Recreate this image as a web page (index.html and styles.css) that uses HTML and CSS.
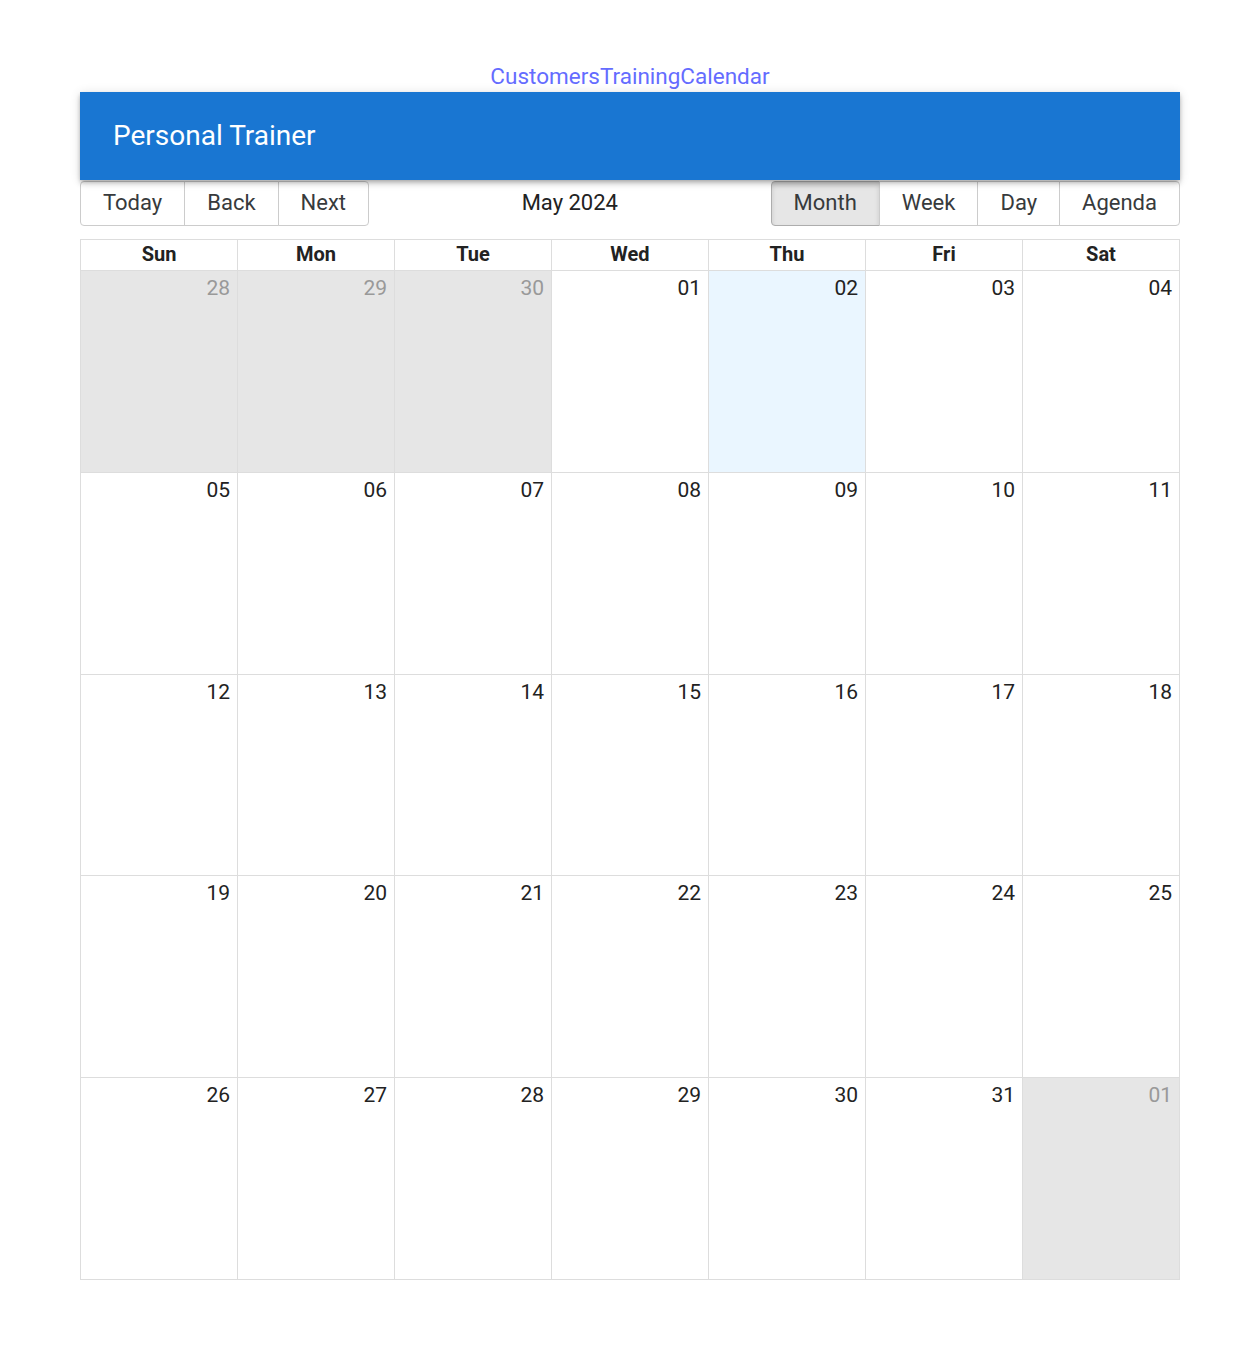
FILE: index.html
```html
<!DOCTYPE html>
<html>
<head>
<meta charset="utf-8">
<link rel="stylesheet" href="styles.css">
</head>
<body>
<div class="page">
  <div class="title"><a class="title-link">CustomersTrainingCalendar</a></div>
  <header class="appbar"><span class="appbar-title">Personal Trainer</span></header>
  <div class="toolbar">
    <div class="btn-group">
      <button class="btn">Today</button>
      <button class="btn">Back</button>
      <button class="btn">Next</button>
    </div>
    <div class="label">May 2024</div>
    <div class="btn-group">
      <button class="btn active">Month</button>
      <button class="btn">Week</button>
      <button class="btn">Day</button>
      <button class="btn">Agenda</button>
    </div>
  </div>
  <div class="month">
    <div class="head-row">
      <div class="head">Sun</div><div class="head">Mon</div><div class="head">Tue</div><div class="head">Wed</div><div class="head">Thu</div><div class="head">Fri</div><div class="head">Sat</div>
    </div>
    <div class="week">
      <div class="day off">28</div><div class="day off">29</div><div class="day off">30</div><div class="day">01</div><div class="day today">02</div><div class="day">03</div><div class="day">04</div>
    </div>
    <div class="week">
      <div class="day">05</div><div class="day">06</div><div class="day">07</div><div class="day">08</div><div class="day">09</div><div class="day">10</div><div class="day">11</div>
    </div>
    <div class="week">
      <div class="day">12</div><div class="day">13</div><div class="day">14</div><div class="day">15</div><div class="day">16</div><div class="day">17</div><div class="day">18</div>
    </div>
    <div class="week">
      <div class="day">19</div><div class="day">20</div><div class="day">21</div><div class="day">22</div><div class="day">23</div><div class="day">24</div><div class="day">25</div>
    </div>
    <div class="week">
      <div class="day">26</div><div class="day">27</div><div class="day">28</div><div class="day">29</div><div class="day">30</div><div class="day">31</div><div class="day off">01</div>
    </div>
  </div>
</div>
</body>
</html>
```

FILE: styles.css
```css
html, body {
  margin: 0;
  padding: 0;
  background: #fff;
}
body {
  font-family: Roboto, "Liberation Sans", sans-serif;
  color: #222;
}
.page {
  width: 1100px;
  margin-left: 80px;
}
.title {
  text-align: center;
  padding-top: 64px;
  margin-bottom: 4px;
  font-size: 22.5px;
  line-height: 24px;
}
.title-link {
  color: #646cff;
  font-weight: 400;
  text-decoration: none;
}
.appbar {
  height: 88px;
  background: #1976d2;
  display: flex;
  align-items: center;
  padding-left: 33px;
  box-shadow: 0px 2px 4px -1px rgba(0,0,0,0.2), 0px 4px 5px 0px rgba(0,0,0,0.14), 0px 1px 10px 0px rgba(0,0,0,0.12);
  position: relative;
  z-index: 1;
}
.appbar-title {
  color: #fff;
  font-size: 28px;
  font-weight: 400;
  line-height: 1;
  margin-top: -1px;
}
.toolbar {
  display: flex;
  align-items: center;
  margin-top: 1px;
  margin-bottom: 13px;
}
.btn-group {
  display: flex;
}
.btn {
  font-family: Roboto, "Liberation Sans", sans-serif;
  font-size: 22px;
  color: #373a3c;
  background: #fff;
  border: 1px solid #ccc;
  height: 45px;
  padding: 0 22px 2px;
  margin: 0;
  border-radius: 0;
  line-height: 1;
}
.btn + .btn {
  margin-left: -1px;
}
.btn:first-child {
  border-radius: 4px 0 0 4px;
}
.btn:last-child {
  border-radius: 0 4px 4px 0;
}
.btn.active {
  background: #e6e6e6;
  border-color: #adadad;
  box-shadow: inset 0 3px 5px rgba(0,0,0,0.125);
}
.label {
  flex: 1;
  text-align: center;
  font-size: 22px;
  color: #222;
  padding-bottom: 2px;
}
.month {
  height: 1041px;
  border: 1px solid #ddd;
  box-sizing: border-box;
  display: flex;
  flex-direction: column;
}
.head-row {
  display: flex;
  height: 30px;
  border-bottom: 1px solid #ddd;
  flex: none;
}
.head {
  flex: 1;
  text-align: center;
  font-weight: 700;
  font-size: 20px;
  line-height: 29px;
  color: #222;
}
.head + .head {
  border-left: 1px solid #ddd;
}
.week {
  flex: 1;
  display: flex;
}
.week + .week {
  border-top: 1px solid #ddd;
}
.day {
  flex: 1;
  text-align: right;
  padding: 5px 7px 0 0;
  font-size: 21px;
  line-height: 24px;
  color: #222;
}
.day + .day {
  border-left: 1px solid #ddd;
}
.day.off {
  background: #e6e6e6;
  color: #999;
}
.day.today {
  background: #eaf6ff;
}
```
